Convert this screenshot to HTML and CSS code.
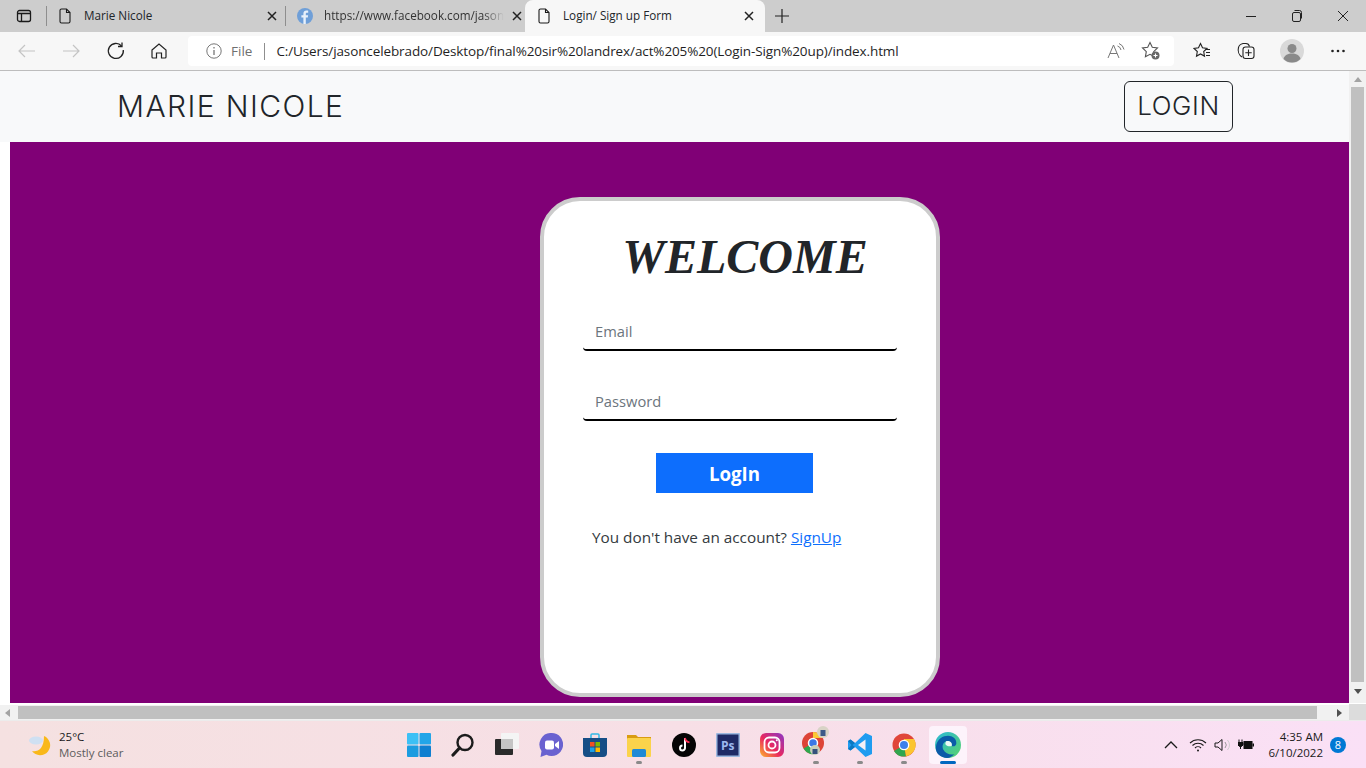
FILE: index.html
```html
<!DOCTYPE html>
<html lang="en">
<head>
    <meta charset="UTF-8">
    <meta name="viewport" content="width=device-width, initial-scale=1.0">
    <title>Login/ Sign up Form</title>
    <link rel="stylesheet" href="styles.css">
</head>
<body>
    <!-- tab strip -->
    <div class="tabstrip">
        <div class="tab-side">
            <svg width="16" height="16" viewBox="0 0 16 16" fill="none" stroke="#1a1a1a" stroke-width="1.3"><rect x="1.5" y="2.5" width="13" height="11" rx="2"/><path d="M1.5 5.5h13M5.5 5.5v8" /></svg>
        </div>
        <div class="tab tab-first">
            <svg class="tab-icon" width="16" height="16" viewBox="0 0 16 16" fill="none" stroke="#1a1a1a" stroke-width="1.1"><path d="M3 2.5a1.5 1.5 0 0 1 1.5-1.5h5l3.500 3.500v9a1.500 1.500 0 0 1-1.500 1.500h-7a1.500 1.500 0 0 1-1.500-1.500z"/><path d="M9.500 1v3.500h3.500"/></svg>
            <span class="tab-title">Marie Nicole</span>
            <svg class="tab-close" width="10" height="10" viewBox="0 0 10 10" stroke="#222" stroke-width="1.500"><path d="M1 1l8 8M9 1l-8 8"/></svg>
        </div>
        <div class="tab tab-second">
            <svg class="tab-icon" width="16" height="16" viewBox="0 0 16 16"><circle cx="8" cy="8" r="8" fill="#6f9fd8"/><path d="M8.800 16V9.500h2l.300-2.300H8.800V5.800c0-.700.300-1.100 1.100-1.100h1.300V2.700c-.300 0-1-.100-1.800-.100-1.800 0-3 1-3 3v1.600h-2v2.300h2V16z" fill="#e8f0fa"/></svg>
            <span class="tab-title tab-title-fade">https://www.facebook.com/jason</span>
            <svg class="tab-close" width="10" height="10" viewBox="0 0 10 10" stroke="#222" stroke-width="1.500"><path d="M1 1l8 8M9 1l-8 8"/></svg>
        </div>
        <div class="tab tab-active">
            <svg class="tab-icon" width="16" height="16" viewBox="0 0 16 16" fill="none" stroke="#1a1a1a" stroke-width="1.100"><path d="M3 2.500a1.500 1.500 0 0 1 1.500-1.500h5l3.500 3.500v9a1.500 1.500 0 0 1-1.500 1.500h-7a1.500 1.500 0 0 1-1.500-1.500z"/><path d="M9.500 1v3.500h3.500"/></svg>
            <span class="tab-title">Login/ Sign up Form</span>
            <svg class="tab-close" width="10" height="10" viewBox="0 0 10 10" stroke="#222" stroke-width="1.500"><path d="M1 1l8 8M9 1l-8 8"/></svg>
        </div>
        <svg class="new-tab" width="14" height="14" viewBox="0 0 14 14" stroke="#222" stroke-width="1.200"><path d="M7 0v14M0 7h14"/></svg>
        <div class="win-buttons">
            <svg width="46" height="12" viewBox="0 0 46 12" stroke="#222" stroke-width="1"><path d="M18 6.500h10"/></svg>
            <svg width="46" height="12" viewBox="0 0 46 12" fill="none" stroke="#222" stroke-width="1"><rect x="18.500" y="2.500" width="8" height="9" rx="1.500"/><path d="M20.500 .5h5a2 2 0 0 1 2 2v6"/></svg>
            <svg width="46" height="12" viewBox="0 0 46 12" stroke="#222" stroke-width="1"><path d="M18 1l10 10M28 1l-10 10"/></svg>
        </div>
    </div>

    <!-- address bar row -->
    <div class="toolbar">
        <div class="nav-buttons">
            <svg width="44" height="18" viewBox="0 0 44 18" fill="none" stroke="#c4c4c4" stroke-width="1.200"><path d="M30 9H14M20 3l-6 6 6 6"/></svg>
            <svg width="44" height="18" viewBox="0 0 44 18" fill="none" stroke="#c4c4c4" stroke-width="1.200"><path d="M14 9h16M24 3l6 6-6 6"/></svg>
            <svg width="44" height="18" viewBox="0 0 44 18" fill="none" stroke="#222" stroke-width="1.300"><path d="M28.500 4a7.500 7.500 0 1 0 1.800 4"/><path d="M29 .5V4.500h-4"/></svg>
            <svg width="44" height="18" viewBox="0 0 44 18" fill="none" stroke="#222" stroke-width="1.200"><path d="M15 8l7-6 7 6v7a1 1 0 0 1-1 1h-3.500v-5h-5v5H16a1 1 0 0 1-1-1z"/></svg>
        </div>
        <div class="address">
            <svg width="16" height="16" viewBox="0 0 16 16" fill="none" stroke="#777" stroke-width="1"><circle cx="8" cy="8" r="7.200"/><path d="M8 7v5M8 4v1.500" stroke-width="1.300"/></svg>
            <span class="addr-file">File</span>
            <span class="addr-sep"></span>
            <span class="addr-url">C:/Users/jasoncelebrado/Desktop/final%20sir%20landrex/act%205%20(Login-Sign%20up)/index.html</span>
            <svg class="addr-read" width="20" height="18" viewBox="0 0 20 18" fill="none" stroke="#777" stroke-width="1"><path d="M1 16L6.500 3 12 16M3 11.500h7"/><path d="M10.500 4a5 5 0 0 1 3.500 4M12 1.500a8 8 0 0 1 5 6"/></svg>
            <svg class="addr-fav" width="20" height="20" viewBox="0 0 20 20" fill="none" stroke="#555" stroke-width="1.100"><path d="M9 1.500l2.300 4.800 5.200.7-3.800 3.600.9 5.200L9 13.300l-4.600 2.500.9-5.200L1.500 7l5.200-.7z"/><circle cx="14.500" cy="14.500" r="4" fill="#666" stroke="none"/><path d="M14.500 12.500v4M12.500 14.500h4" stroke="#fff"/></svg>
        </div>
        <div class="tool-buttons">
            <svg width="18" height="18" viewBox="0 0 18 18" fill="none" stroke="#222" stroke-width="1.100"><path d="M7.500 1.500l2 4.300 4.500.6-3.300 3.100.8 4.600-4-2.200-4 2.200.8-4.600L1 6.400l4.500-.6z"/><path d="M12.500 7.500H17M13 10.500h4M13 13.500h4"/></svg>
            <svg width="18" height="18" viewBox="0 0 18 18" fill="none" stroke="#222" stroke-width="1.100"><path d="M5 15C2 13 .5 9 1.500 5.500 2 3 4 2 6 1.500h3c2 0 3 1 3.500 3"/><rect x="6" y="5" width="11" height="11.500" rx="2.500"/><path d="M11.500 7.500v6.500M8.300 10.700h6.400"/></svg>
            <svg width="24" height="24" viewBox="0 0 24 24"><circle cx="12" cy="12" r="12" fill="#d9d9d9"/><circle cx="12" cy="9.500" r="4.500" fill="#8a8a8a"/><path d="M3.500 20c1-4 4.500-5.500 8.500-5.500s7.500 1.500 8.500 5.500a12 12 0 0 1-17 0z" fill="#8a8a8a"/></svg>
            <svg width="18" height="18" viewBox="0 0 18 18" fill="#222"><circle cx="3.500" cy="9" r="1.300"/><circle cx="9" cy="9" r="1.300"/><circle cx="14.500" cy="9" r="1.300"/></svg>
        </div>
    </div>

    <!-- page in the viewport -->
    <div class="viewport">
        <div class="page-area">
            <div class="page">
                <nav class="navbar">
                    <a class="brand">MARIE NICOLE</a>
                    <button class="nav-login">LOGIN</button>
                </nav>
                <main class="hero">
                    <form class="card">
                        <h1 class="welcome">WELCOME</h1>
                        <input class="field" type="text" placeholder="Email">
                        <input class="field" type="password" placeholder="Password">
                        <button class="submit" type="button">LogIn</button>
                        <p class="switch">You don't have an account? <a href="#">SignUp</a></p>
                    </form>
                </main>
            </div>
            <div class="vscroll">
                <span class="arrow arrow-up"></span>
                <span class="vthumb"></span>
                <span class="arrow arrow-down"></span>
            </div>
        </div>
        <div class="hscroll">
            <span class="arrow arrow-left"></span>
            <span class="hthumb"></span>
            <span class="arrow arrow-right"></span>
            <span class="corner"></span>
        </div>
    </div>

    <!-- taskbar -->
    <footer class="taskbar">
        <div class="weather">
            <svg width="24" height="24" viewBox="0 0 24 24"><path d="M14 3a10 10 0 1 1-12 15c6 1 12-2 12-15z" fill="#f9b81a" transform="translate(2 0)"/><ellipse cx="8" cy="7.500" rx="7" ry="4" fill="#cfe0f2"/></svg>
            <div class="weather-text">
                <span class="temp">25°C</span>
                <span class="sky">Mostly clear</span>
            </div>
        </div>
        <div class="apps">
            <span class="app"><svg width="24" height="24" viewBox="0 0 24 24"><rect x="0" y="0" width="11.500" height="11.500" rx="1" fill="#3cc0f5"/><rect x="12.500" y="0" width="11.500" height="11.500" rx="1" fill="#22a5e8"/><rect x="0" y="12.500" width="11.500" height="11.500" rx="1" fill="#1b9ce0"/><rect x="12.500" y="12.500" width="11.500" height="11.500" rx="1" fill="#0f7fd0"/></svg></span>
            <span class="app"><svg width="24" height="24" viewBox="0 0 24 24" fill="none" stroke="#1c1c1c"><circle cx="14" cy="9.500" r="7.500" stroke-width="2.400"/><path d="M8.500 15L2 22" stroke-width="3.200" stroke-linecap="round"/></svg></span>
            <span class="app"><svg width="24" height="24" viewBox="0 0 24 24"><rect x="6" y="0" width="18" height="16" rx="1" fill="#f4f4f4"/><rect x="0" y="6" width="18" height="16" rx="1" fill="#2a2a2a"/><rect x="6" y="6" width="12" height="10" fill="#c4c4c4"/></svg></span>
            <span class="app"><svg width="24" height="24" viewBox="0 0 24 24"><path d="M12.500 0a11.500 11.500 0 1 1-5 21.800L1.500 24l1-6A11.500 11.500 0 0 1 12.500 0z" fill="#6a62d0"/><rect x="6" y="7.500" width="9" height="9" rx="2" fill="#fff"/><path d="M16 11l4-3v8l-4-3z" fill="#fff"/></svg></span>
            <span class="app"><svg width="24" height="24" viewBox="0 0 24 24"><path d="M8 5V2a1 1 0 0 1 1-1h6a1 1 0 0 1 1 1v3" fill="none" stroke="#31b9e6" stroke-width="1.500"/><path d="M0 5h24v15a4 4 0 0 1-4 4H4a4 4 0 0 1-4-4z" fill="#164e86"/><rect x="7" y="9" width="4.500" height="4.500" fill="#f25022"/><rect x="12.500" y="9" width="4.500" height="4.500" fill="#7fba00"/><rect x="7" y="14.500" width="4.500" height="4.500" fill="#1aa1e8"/><rect x="12.500" y="14.500" width="4.500" height="4.500" fill="#ffb900"/></svg></span>
            <span class="app app-open"><svg width="24" height="24" viewBox="0 0 24 24"><path d="M0 2h9l2 2h13v4H0z" fill="#d99c12"/><rect x="0" y="5" width="24" height="19" rx="1" fill="#fbd34b"/><rect x="5" y="16" width="14" height="8" rx="1.500" fill="#1f8ad6"/></svg></span>
            <span class="app"><svg width="24" height="24" viewBox="0 0 24 24"><circle cx="12" cy="12" r="12" fill="#050505"/><path d="M13 5v10a2.500 2.500 0 1 1-2.500-2.500" fill="none" stroke="#fff" stroke-width="2"/><path d="M13 5c.4 2.500 2 4 4.500 4.300" fill="none" stroke="#ff2d55" stroke-width="1.800"/></svg></span>
            <span class="app"><svg width="24" height="24" viewBox="0 0 24 24"><rect width="24" height="24" rx="1" fill="#9db8e0"/><rect x="1.500" y="1.500" width="21" height="21" fill="#1f2a66"/><text class="ps" x="5" y="17">Ps</text></svg></span>
            <span class="app"><svg width="24" height="24" viewBox="0 0 24 24"><defs><linearGradient id="ig" x1="0" y1="1" x2="1" y2="0"><stop offset="0" stop-color="#fdb72b"/><stop offset=".45" stop-color="#e9285f"/><stop offset="1" stop-color="#8a38c8"/></linearGradient></defs><rect width="24" height="24" rx="6" fill="url(#ig)"/><rect x="4.500" y="4.500" width="15" height="15" rx="4.500" fill="none" stroke="#fff" stroke-width="1.800"/><circle cx="12" cy="12" r="3.500" fill="none" stroke="#fff" stroke-width="1.800"/><circle cx="16.800" cy="7.200" r="1" fill="#fff"/></svg></span>
            <span class="app app-open app-photo"><svg width="30" height="30" viewBox="0 0 30 30"><circle cx="11" cy="17" r="11" fill="#dd4437"/><path d="M11 17L1.500 22.500A11 11 0 0 0 16 27z" fill="#2fa84f"/><path d="M11 6a11 11 0 0 1 10 6H11z" fill="#fcc934"/><circle cx="11" cy="17" r="4.500" fill="#3b78e7" stroke="#fff" stroke-width="1.500"/><circle cx="21" cy="6" r="6" fill="#d8d3c6"/><rect x="18.500" y="4" width="5" height="6" fill="#3c5a88"/><circle cx="13" cy="24" r="5" fill="#c8cfba"/><rect x="10.500" y="23" width="5" height="5" fill="#35507c"/></svg></span>
            <span class="app app-open"><svg width="24" height="24" viewBox="0 0 24 24"><path d="M17.500 0L24 3v18l-6.500 3L7 14l-4.500 3.500L0 16V8l2.500-1.500L7 10z" fill="#1f9cf0"/><path d="M17.500 6.500L10 12l7.500 5.500z" fill="#f3f0f5"/><path d="M0 8l2.500-1.500L7 10 4.500 12 7 14l-4.500 3.500L0 16l3.500-4z" fill="#0b78c2"/></svg></span>
            <span class="app app-open"><svg width="24" height="24" viewBox="0 0 24 24"><circle cx="12" cy="12" r="11.500" fill="#e0463a"/><path d="M12 12L2 18a11.500 11.500 0 0 0 12 5.300z" fill="#30a64f"/><path d="M12 6h10a11.500 11.500 0 0 1-8 17.300L12 12z" fill="#fbc52f"/><circle cx="12" cy="12" r="5.300" fill="#fff"/><circle cx="12" cy="12" r="4" fill="#3d80ea"/></svg></span>
            <span class="app app-active"><svg width="26" height="26" viewBox="0 0 28 28"><defs><linearGradient id="edge" x1="0" y1="0" x2="1" y2="1"><stop offset="0" stop-color="#2bb8d8"/><stop offset="1" stop-color="#59d36b"/></linearGradient></defs><circle cx="14" cy="14" r="14" fill="url(#edge)"/><path d="M1 16C2 7 9 4 14 4c5 0 9 3 9 8 0 3-3 4-5 3 1-4-3-6-6-5-3 1-5 5-3 9 2 4 7 6 12 5-2 2-5 4-8 4C6 28 0 23 1 16z" fill="#0b5ba8"/><path d="M12 10c3-1 7 1 6 5-3 1-9 0-6-5z" fill="#fff" opacity=".9"/></svg></span>
        </div>
        <div class="tray">
            <svg width="14" height="10" viewBox="0 0 14 10" fill="none" stroke="#1a1a1a" stroke-width="1.300"><path d="M1 8l6-6 6 6"/></svg>
            <svg class="tray-wifi" width="18" height="14" viewBox="0 0 18 14" fill="none" stroke="#1a1a1a" stroke-width="1.100"><path d="M1 5a11.500 11.500 0 0 1 16 0M3.500 7.500a8 8 0 0 1 11 0M6 10a4.300 4.300 0 0 1 6 0"/><circle cx="9" cy="12.500" r="1" fill="#1a1a1a" stroke="none"/></svg>
            <svg class="tray-vol" width="18" height="14" viewBox="0 0 18 14" fill="none" stroke="#1a1a1a" stroke-width="1"><path d="M1 5h3l4-3.500v11L4 9H1z"/><path d="M11 4a4.500 4.500 0 0 1 0 6" stroke="#999"/><path d="M13.500 2a8 8 0 0 1 0 10" stroke="#ccc"/></svg>
            <svg class="tray-bat" width="16" height="14" viewBox="0 0 16 14"><path d="M1 1.500v3M4 1.500v3M0 4.500h5v2.500l-1.500 1.500H1.500L0 7zM2.500 8v3" stroke="#111" stroke-width="1" fill="#111"/><rect x="5.500" y="3" width="9" height="8" fill="#111"/><rect x="14.500" y="5.500" width="1.500" height="3" fill="#111"/></svg>
            <div class="clock">
                <span>4:35 AM</span>
                <span>6/10/2022</span>
            </div>
            <span class="badge">8</span>
        </div>
    </footer>
</body>
</html>
```

FILE: styles.css
```css
* {
    box-sizing: border-box;
}

html, body {
    margin: 0;
    width: 1366px;
    height: 768px;
    overflow: hidden;
}

body {
    font-family: "Open Sans", "Noto Sans", sans-serif;
    color: #212529;
    background-color: #f7f7f7;
    display: flex;
    flex-direction: column;
}

/* tab strip */
.tabstrip {
    height: 32px;
    background-color: #cdcdcd;
    display: flex;
    align-items: center;
    flex: none;
}

.tab-side {
    width: 47px;
    height: 20px;
    padding-left: 16px;
    border-right: 1px solid #8e8e8e;
    display: flex;
    align-items: center;
}

.tab {
    height: 32px;
    display: flex;
    align-items: center;
    font-size: 11.7px;
    line-height: 30px;
}

.tab-title {
    flex: 1;
    height: 30px;
    margin-bottom: 2px;
    white-space: nowrap;
}

.tab-icon {
    flex: none;
    margin-right: 11px;
}

.tab-close {
    flex: none;
}

.tab-first {
    width: 239px;
    padding: 0 9px 0 10px;
    position: relative;
}

.tab-first::after {
    content: "";
    position: absolute;
    right: 0;
    top: 6px;
    height: 20px;
    border-right: 1px solid #8e8e8e;
}

.tab-second {
    width: 239px;
    padding: 0 9px 0 11px;
    color: #333;
}

.tab-title-fade {
    margin-right: 8px;
    -webkit-mask-image: linear-gradient(to right, #000 88%, transparent 100%);
    mask-image: linear-gradient(to right, #000 88%, transparent 100%);
}

.tab-active {
    width: 240px;
    padding: 0 11px 0 11px;
    background-color: #f7f7f7;
    border-radius: 8px 8px 0 0;
}

.new-tab {
    margin-left: 10px;
}

.win-buttons {
    margin-left: auto;
    display: flex;
    width: 138px;
}

/* toolbar */
.toolbar {
    height: 39px;
    flex: none;
    padding: 4px 0 4px 5px;
    background-color: #f7f7f7;
    border-bottom: 1px solid #bdbdbd;
    display: flex;
    align-items: center;
}

.nav-buttons {
    display: flex;
    align-items: center;
    width: 183px;
}

.address {
    width: 986px;
    height: 30px;
    background-color: #fff;
    border-radius: 4px;
    display: flex;
    align-items: center;
    padding: 0 13px 0 18px;
    font-size: 13.5px;
}

.addr-file {
    margin-left: 9px;
    color: #6f6f6f;
}

.addr-sep {
    width: 1px;
    height: 17px;
    margin: 0 11px 0 12px;
    background-color: #8f8f8f;
}

.addr-url {
    color: #1f1f1f;
    letter-spacing: -0.11px;
    white-space: nowrap;
}

.addr-read {
    margin-left: auto;
}

.addr-fav {
    margin-left: 14px;
}

.tool-buttons {
    flex: 1;
    display: flex;
    align-items: center;
    padding-left: 19px;
}

.tool-buttons svg:nth-child(2) {
    margin-left: 26px;
}

.tool-buttons svg:nth-child(3) {
    margin-left: 25px;
}

.tool-buttons svg:nth-child(4) {
    margin-left: 25px;
}

/* page */
.viewport {
    flex: none;
    height: 649px;
    background-color: #fff;
}

.page-area {
    height: 632px;
    display: flex;
}

.page {
    width: 1349px;
    overflow: hidden;
}

.navbar {
    height: 71px;
    padding: 10px 116px 10px 117px;
    background-color: #f8f9fa;
    display: flex;
    align-items: center;
    justify-content: space-between;
}

.brand {
    margin-bottom: 2px;
    font-family: Inter, "Open Sans", sans-serif;
    font-size: 30px;
    font-weight: 300;
    letter-spacing: 1.4px;
    color: #212529;
}

.nav-login {
    width: 109px;
    height: 51px;
    flex: none;
    padding: 0 0 2px;
    font-family: Inter, "Open Sans", sans-serif;
    font-size: 26px;
    font-weight: 300;
    letter-spacing: 0.6px;
    color: #212529;
    background: transparent;
    border: 1px solid #212529;
    border-radius: 6px;
}

.hero {
    height: 561px;
    margin-left: 10px;
    padding: 55px 0 0 530px;
    background-color: #800076;
    display: flex;
}

.card {
    width: 400px;
    height: 500px;
    padding: 0 39px;
    background-color: #fff;
    border: 4px solid #ccc;
    border-radius: 40px;
    display: flex;
    flex-direction: column;
    align-items: flex-start;
}

.welcome {
    width: 100%;
    margin: 30px 0 32px;
    padding-left: 10px;
    font-family: "Liberation Serif", serif;
    font-style: italic;
    font-weight: 700;
    font-size: 48px;
    line-height: 52px;
    text-align: center;
    color: #212529;
}

.field {
    width: 314px;
    height: 36px;
    flex: none;
    padding: 0 13px 2px 12px;
    margin-bottom: 34px;
    font-family: inherit;
    font-size: 14.7px;
    border: none;
    border-bottom: 2px solid #000;
    border-radius: 4px;
    outline: none;
}

.field::placeholder {
    color: #6c757d;
    opacity: 1;
}

.submit {
    width: 157px;
    height: 40px;
    flex: none;
    margin: -2px 0 0 73px;
    font-family: inherit;
    font-size: 18.7px;
    font-weight: 700;
    color: #fff;
    background-color: #0d6efd;
    border: none;
}

.switch {
    margin: 33px 0 0 9px;
    font-size: 15.3px;
    line-height: 22px;
    white-space: nowrap;
    color: #343a40;
}

.switch a {
    color: #0d6efd;
}

/* scrollbars */
.vscroll {
    flex: none;
    width: 17px;
    background-color: #f1f1f1;
    display: flex;
    flex-direction: column;
    align-items: center;
    padding: 6px 0;
}

.vthumb {
    width: 13px;
    height: 595px;
    margin: 5px 0 7px;
    background-color: #c0c0c0;
}

.hscroll {
    height: 17px;
    background-color: #f1f1f1;
    border-top: 2px solid #fff;
    display: flex;
    align-items: center;
    padding-left: 5px;
}

.hthumb {
    width: 1299px;
    height: 13px;
    margin-left: 8px;
    background-color: #c0c0c0;
}

.corner {
    margin-left: auto;
    width: 17px;
    height: 17px;
    background-color: #dcdcdc;
}

.arrow {
    width: 0;
    height: 0;
    flex: none;
    border-style: solid;
    border-color: transparent;
}

.arrow-up {
    border-width: 0 4px 5px;
    border-bottom-color: #a3a3a3;
}

.arrow-down {
    border-width: 5px 4px 0;
    border-top-color: #505050;
}

.arrow-left {
    border-width: 4px 5px 4px 0;
    border-right-color: #a3a3a3;
}

.arrow-right {
    margin-left: 20px;
    border-width: 4px 0 4px 5px;
    border-left-color: #505050;
}

/* taskbar */
.taskbar {
    flex: 1;
    position: relative;
    display: flex;
    align-items: center;
    justify-content: center;
    background: linear-gradient(to right, #f5e1e1, #f7dfe6 50%, #fae0f6);
    border-top: 1px solid #ececec;
}

.weather {
    position: absolute;
    left: 28px;
    top: 8px;
    display: flex;
    align-items: center;
    gap: 7px;
    font-size: 11.5px;
}

.weather-text {
    display: flex;
    flex-direction: column;
    line-height: 16px;
}

.temp {
    color: #1a1a1a;
}

.sky {
    color: #5c5c5c;
}

.apps {
    display: flex;
    margin-left: 1px;
}

.app {
    width: 44.1px;
    height: 38px;
    display: flex;
    align-items: center;
    justify-content: center;
    position: relative;
}

.app-open::after,
.app-active::after {
    content: "";
    position: absolute;
    bottom: 0;
    left: 50%;
    width: 6px;
    height: 3px;
    margin-left: -3px;
    border-radius: 2px;
    background-color: #8a8a8a;
}

.app-photo svg {
    margin: -7px -2px 0 0;
}

.app-active {
    width: 38px;
    margin: 0 3px;
    background-color: #fdf3fb;
    border-radius: 4px;
}

.app-active::after {
    width: 16px;
    margin-left: -8px;
    background-color: #0067c0;
}

.ps {
    font-family: "Open Sans", sans-serif;
    font-size: 12px;
    font-weight: 700;
    fill: #9db8f0;
}

.tray {
    position: absolute;
    right: 20px;
    top: 0;
    height: 48px;
    display: flex;
    align-items: center;
}

.tray-wifi {
    margin-left: 11px;
}

.tray-vol {
    margin-left: 7px;
}

.tray-bat {
    margin-left: 6px;
}

.clock {
    width: 69px;
    display: flex;
    flex-direction: column;
    align-items: flex-end;
    font-size: 11.5px;
    line-height: 16px;
    color: #1a1a1a;
}

.badge {
    width: 16px;
    height: 16px;
    margin-left: 7px;
    border-radius: 50%;
    background-color: #0078d4;
    color: #fff;
    font-size: 11px;
    line-height: 16px;
    text-align: center;
}
```
